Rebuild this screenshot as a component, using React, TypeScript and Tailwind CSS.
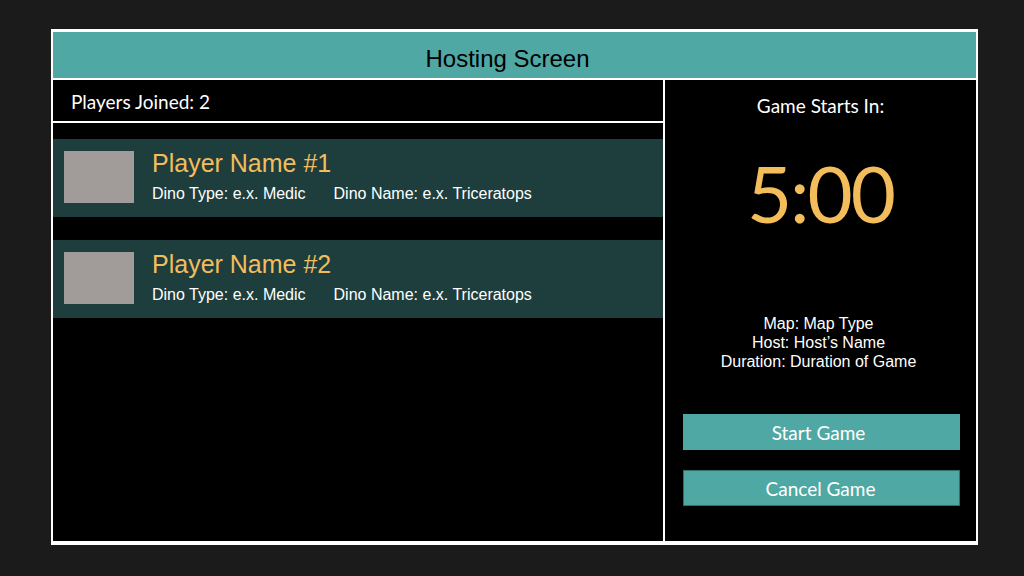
import React from "react";

const players = [
  { name: "Player Name #1", type: "e.x. Medic", dino: "e.x. Triceratops" },
  { name: "Player Name #2", type: "e.x. Medic", dino: "e.x. Triceratops" },
];

export default function App() {
  return (
    <div className="h-[576px] w-[1024px] bg-[#1b1b1b] pl-[51px] pt-[29px]">
      <div className="flex h-[516px] w-[927px] flex-col border-x-2 border-t-[3px] border-b-4 border-white bg-black">
        {/* header */}
        <div className="flex h-[48px] items-center justify-center border-b-2 border-white bg-[#4fa8a4] pt-[7px] pr-[14px] font-['Liberation_Sans',Arial,sans-serif] text-[24px] text-black">
          Hosting Screen
        </div>

        <div className="flex flex-1">
          {/* players */}
          <div className="flex flex-1 flex-col border-r-2 border-white">
            <div className="flex h-[43px] items-center border-b-2 border-white pl-[18px] pt-[3px] font-['Lato',sans-serif] text-[19px] text-white">
              Players Joined: 2
            </div>
            <div className="mt-4 flex flex-col gap-[23px]">
              {players.map((p) => (
                <div key={p.name} className="flex h-[78px] items-start bg-[#1e3d3d] pl-[11px] pt-3">
                  <div className="h-[52px] w-[70px] bg-[#a19c99]" />
                  <div className="-mt-[1px] ml-[18px] flex flex-col font-['Liberation_Sans',Arial,sans-serif]">
                    <span className="text-[25px] leading-[26px] text-[#f4bd5b]">{p.name}</span>
                    <div className="mt-[8px] flex gap-7 text-[16px] leading-[20px] text-white">
                      <span>Dino Type: {p.type}</span>
                      <span>Dino Name: {p.dino}</span>
                    </div>
                  </div>
                </div>
              ))}
            </div>
          </div>

          {/* countdown */}
          <div className="flex w-[311px] flex-col items-center">
            <div className="mt-[12px] font-['Lato',sans-serif] text-[19px] text-white">Game Starts In:</div>
            <div className="mt-[22px] font-['Lato',sans-serif] text-[78px] leading-[100px] tracking-[-2px] text-[#f4bd5b]">5:00</div>
            <div className="mt-[71px] pr-[4px] text-center font-['Liberation_Sans',Arial,sans-serif] text-[16px] leading-[19px] text-white">
              <div>Map: Map Type</div>
              <div>Host: Host’s Name</div>
              <div>Duration: Duration of Game</div>
            </div>
            <div className="mt-[43px] flex flex-col gap-5 pl-[2px]">
              <button className="h-9 w-[277px] bg-[#4fa8a4] pt-[3px] pr-[6px] font-['Lato',sans-serif] text-[19px] text-white">
                Start Game
              </button>
              <button className="h-9 w-[277px] border border-[#2f6f6c] bg-[#4fa8a4] pt-[3px] pr-[2px] font-['Lato',sans-serif] text-[19px] text-white">
                Cancel Game
              </button>
            </div>
          </div>
        </div>
      </div>
    </div>
  );
}
